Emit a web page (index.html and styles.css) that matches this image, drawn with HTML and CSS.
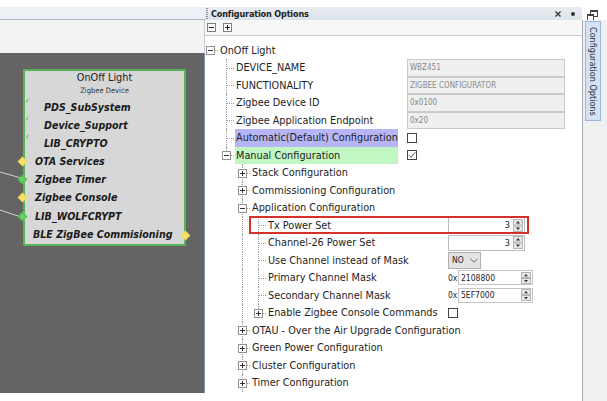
FILE: index.html
```html
<!DOCTYPE html>
<html>
<head>
<meta charset="utf-8">
<link rel="stylesheet" href="styles.css">
</head>
<body>
<div class="app">
  <div class="left">
    <div class="l-top"></div>
    <div class="l-bar"></div>
    <div class="l-light"></div>
    <div class="canvas">
      <svg class="wires" width="30" height="200" viewBox="0 0 30 200"><path d="M0 119 L21 125" stroke="#d4d4d4" stroke-width="1" fill="none"/><path d="M0 157 L21 164" stroke="#d4d4d4" stroke-width="1" fill="none"/></svg>
      <div class="node">
        <div class="nt">OnOff Light</div>
        <div class="ns">Zigbee Device</div>
        <div class="ni i1"><span class="tick"></span>PDS_SubSystem</div>
        <div class="ni i1"><span class="tick"></span>Device_Support</div>
        <div class="ni i1"><span class="tick"></span>LIB_CRYPTO</div>
        <div class="ni i2"><span class="dia y"></span>OTA Services</div>
        <div class="ni i2"><span class="dia gr"></span>Zigbee Timer</div>
        <div class="ni i2"><span class="dia y"></span>Zigbee Console</div>
        <div class="ni i2 wolf"><span class="dia gr"></span>LIB_WOLFCRYPT</div>
        <div class="ni i3"><span class="dia y r"></span>BLE ZigBee Commisioning</div>
      </div>
    </div>
    <div class="l-bottom"></div>
  </div>

  <div class="cfg">
    <div class="cfg-top"></div>
    <div class="cfg-head">
      <span class="grip"></span>
      <span class="title">Configuration Options</span>
      <span class="spacer"></span>
      <svg class="hx" width="6" height="6" viewBox="0 0 6 6"><path d="M0.5 0.5 L5.5 5.5 M5.5 0.5 L0.5 5.5" stroke="#333" stroke-width="1.3"/></svg>
      <span class="hdot"></span>
    </div>
    <div class="cfg-tools">
      <span class="tb minus"></span>
      <span class="tb plus"></span>
    </div>
    <div class="tree">
      <div class="row"><span class="n root"><i class="exp minus"></i></span><span class="lbl">OnOff Light</span></div>

      <div class="row"><span class="g"></span><span class="n mid"></span><span class="lbl w1">DEVICE_NAME</span><span class="tf">WBZ451</span></div>
      <div class="row"><span class="g"></span><span class="n mid"></span><span class="lbl w1">FUNCTIONALITY</span><span class="tf">ZIGBEE CONFIGURATOR</span></div>
      <div class="row"><span class="g"></span><span class="n mid"></span><span class="lbl w1">Zigbee Device ID</span><span class="tf">0x0100</span></div>
      <div class="row"><span class="g"></span><span class="n mid"></span><span class="lbl w1">Zigbee Application Endpoint</span><span class="tf">0x20</span></div>
      <div class="row"><span class="g"></span><span class="n mid"></span><span class="lbl w1 purple">Automatic(Default) Configuration</span><span class="val"><span class="cb"></span></span></div>
      <div class="row"><span class="g"></span><span class="n last"><i class="exp minus"></i></span><span class="lbl w1 green">Manual Configuration</span><span class="val"><span class="cb"><svg width="8" height="8" viewBox="0 0 8 8"><path d="M0.8 4 L3 6.3 L7.3 1.2" stroke="#555" stroke-width="1" fill="none"/></svg></span></span></div>

      <div class="row"><span class="g"></span><span class="g"></span><span class="n mid"><i class="exp plus"></i></span><span class="lbl">Stack Configuration</span></div>
      <div class="row"><span class="g"></span><span class="g"></span><span class="n mid"><i class="exp plus"></i></span><span class="lbl">Commissioning Configuration</span></div>
      <div class="row"><span class="g"></span><span class="g"></span><span class="n mid"><i class="exp minus"></i></span><span class="lbl">Application Configuration</span></div>

      <div class="row"><span class="g"></span><span class="g"></span><span class="g v"></span><span class="n mid"></span><span class="lbl w3">Tx Power Set</span><span class="val"><span class="spin"><span class="sv">3</span><svg class="sb" width="10" height="13" viewBox="0 0 10 13"><rect x="0.5" y="0.5" width="9" height="5.5" fill="#e8e8e8" stroke="#b4b4b4"/><rect x="0.5" y="7" width="9" height="5.5" fill="#e8e8e8" stroke="#b4b4b4"/><path d="M3 4.5h4L5 2z" fill="#333"/><path d="M3 8.5h4l-2 2.5z" fill="#333"/></svg></span></span><span class="redbox"></span></div>
      <div class="row"><span class="g"></span><span class="g"></span><span class="g v"></span><span class="n mid"></span><span class="lbl w3">Channel-26 Power Set</span><span class="val"><span class="spin"><span class="sv">3</span><svg class="sb" width="10" height="13" viewBox="0 0 10 13"><rect x="0.5" y="0.5" width="9" height="5.5" fill="#e8e8e8" stroke="#b4b4b4"/><rect x="0.5" y="7" width="9" height="5.5" fill="#e8e8e8" stroke="#b4b4b4"/><path d="M3 4.5h4L5 2z" fill="#333"/><path d="M3 8.5h4l-2 2.5z" fill="#333"/></svg></span></span></div>
      <div class="row"><span class="g"></span><span class="g"></span><span class="g v"></span><span class="n mid"></span><span class="lbl w3">Use Channel instead of Mask</span><span class="val"><span class="combo">NO<svg width="8" height="5" viewBox="0 0 8 5"><path d="M0.5 0.8 L4 4.2 L7.5 0.8" stroke="#666" stroke-width="1" fill="none"/></svg></span></span></div>
      <div class="row"><span class="g"></span><span class="g"></span><span class="g v"></span><span class="n mid"></span><span class="lbl w3">Primary Channel Mask</span><span class="val"><span class="ox">0x</span><span class="hexf"><span class="hv">2108800</span><svg class="sb" width="10" height="12" viewBox="0 0 10 12"><rect x="0.5" y="0.5" width="9" height="5" fill="#e8e8e8" stroke="#b4b4b4"/><rect x="0.5" y="6.5" width="9" height="5" fill="#e8e8e8" stroke="#b4b4b4"/><path d="M3 4.2h4L5 2z" fill="#333"/><path d="M3 8h4l-2 2.3z" fill="#333"/></svg></span></span></div>
      <div class="row"><span class="g"></span><span class="g"></span><span class="g v"></span><span class="n mid"></span><span class="lbl w3">Secondary Channel Mask</span><span class="val"><span class="ox">0x</span><span class="hexf"><span class="hv">5EF7000</span><svg class="sb" width="10" height="12" viewBox="0 0 10 12"><rect x="0.5" y="0.5" width="9" height="5" fill="#e8e8e8" stroke="#b4b4b4"/><rect x="0.5" y="6.5" width="9" height="5" fill="#e8e8e8" stroke="#b4b4b4"/><path d="M3 4.2h4L5 2z" fill="#333"/><path d="M3 8h4l-2 2.3z" fill="#333"/></svg></span></span></div>
      <div class="row"><span class="g"></span><span class="g"></span><span class="g v"></span><span class="n last"><i class="exp plus"></i></span><span class="lbl w3">Enable Zigbee Console Commands</span><span class="val"><span class="cb"></span></span></div>

      <div class="row"><span class="g"></span><span class="g"></span><span class="n mid"><i class="exp plus"></i></span><span class="lbl">OTAU - Over the Air Upgrade Configuration</span></div>
      <div class="row"><span class="g"></span><span class="g"></span><span class="n mid"><i class="exp plus"></i></span><span class="lbl">Green Power Configuration</span></div>
      <div class="row"><span class="g"></span><span class="g"></span><span class="n mid"><i class="exp plus"></i></span><span class="lbl">Cluster Configuration</span></div>
      <div class="row"><span class="g"></span><span class="g"></span><span class="n mid"><i class="exp plus"></i></span><span class="lbl">Timer Configuration</span></div>
    </div>
  </div>

  <div class="strip">
    <div class="strip-top">
      <svg class="restore" width="11" height="11" viewBox="0 0 11 11"><rect x="3.5" y="0.5" width="7" height="6" fill="#fff" stroke="#444"/><rect x="3.5" y="0.5" width="7" height="1.5" fill="#444"/><rect x="0.5" y="4.5" width="6" height="6" fill="#fff" stroke="#444"/><rect x="0.5" y="4.5" width="6" height="1.5" fill="#444"/></svg>
    </div>
    <div class="strip-body">
      <div class="vtab"><span>Configuration Options</span></div>
    </div>
  </div>
</div>
</body>
</html>
```

FILE: styles.css
```css
* { box-sizing: border-box; margin: 0; padding: 0; }
html, body { width: 607px; height: 401px; overflow: hidden; background: #fff; }
body { font-family: "DejaVu Sans Condensed", "DejaVu Sans", sans-serif; color: #1e1e1e; }

.app { display: flex; height: 401px; }

/* ---------- left canvas ---------- */
.left { width: 205px; flex: none; display: flex; flex-direction: column; }
.l-top { height: 7px; }
.l-bar { height: 13px; background: #edf0f4; border-bottom: 1px solid #a9b6c6; }
.l-light { height: 33px; background: #f3f3f3; border-right: 1px solid #c6ced8; }
.canvas { height: 340px; background: #646464; border-right: 1px solid #8797ae; position: relative; }
.l-bottom { flex: 1; }

.wires { position: absolute; left: 0; top: 0; }

.node {
  position: absolute; left: 23px; top: 16px; width: 163px; height: 177px;
  background: #d7d7d7; border: 2px solid #56b356; border-radius: 1px;
}
.nt { height: 13px; line-height: 13px; text-align: center; font-size: 10.8px; color: #222; }
.ns { height: 14px; line-height: 14px; text-align: center; font-size: 7.5px; color: #333; }
.ni {
  position: relative; height: 18px; line-height: 18px;
  font-size: 10.6px; font-weight: bold; font-style: oblique; color: #1a1a1a; white-space: nowrap;
}
.i1 { padding-left: 19px; }
.i2 { padding-left: 10px; }
.i3 { padding-left: 8px; height: 19px; line-height: 21px; }
.wolf { line-height: 20px; }
.tick {
  position: absolute; left: 0px; top: 0px; width: 3px; height: 4px;
  border-right: 1px solid #59c759; transform: rotate(25deg);
}
.dia {
  position: absolute; left: -6px; top: 50%; width: 7px; height: 7px; margin-top: -3.5px;
  transform: rotate(45deg);
}
.wolf .dia { margin-top: -2.5px; }
.i3 .dia { margin-top: -2px; }
.dia.y { background: #f6e46a; box-shadow: inset 0 0 0 1px #f0d63e; }
.dia.gr { background: #63d363; box-shadow: inset 0 0 0 1px #46bb46; }
.dia.r { left: auto; right: -5px; }

/* ---------- configuration panel ---------- */
.cfg { width: 377px; flex: none; display: flex; flex-direction: column; background: #fff; }
.cfg-top { height: 7px; }
.cfg-head {
  height: 13px; display: flex; align-items: center;
  background: linear-gradient(#e9edf2, #dde3ea);
}
.grip {
  width: 2px; height: 11px; margin: 0 3px 0 1px;
  background: repeating-linear-gradient(#8a96a6 0 1px, transparent 1px 2px);
}
.title { font-size: 9px; font-weight: bold; color: #1c1c1c; letter-spacing: -0.15px; }
.spacer { flex: 1; }
.hx { margin-right: 10px; }
.hdot { width: 4px; height: 4px; border-radius: 50%; background: #333; margin-right: 7px; }

.cfg-tools {
  height: 16px; display: flex; align-items: center; gap: 7px; padding-left: 2px;
  background: #f7f7f7; border-bottom: 1px solid #c8c8c8;
}
.tb { width: 9px; height: 9px; border: 1px solid #7f7f7f; background: #fff; position: relative; }
.tb::before { content: ""; position: absolute; left: 1px; right: 1px; top: 3px; height: 1px; background: #222; }
.tb.plus::after { content: ""; position: absolute; top: 1px; bottom: 1px; left: 3px; width: 1px; background: #222; }

.tree { padding-top: 5.5px; font-size: 10.8px; }
.row { display: flex; height: 17.5px; position: relative; white-space: nowrap; }

.g { width: 16px; flex: none; position: relative; }
.g.v::after {
  content: ""; position: absolute; left: 5px; top: 0; bottom: 0; border-left: 1px dotted #999;
}
.n { width: 14px; flex: none; position: relative; }
.n::before {
  content: ""; position: absolute; left: 6px; right: 1px; top: 50%; border-top: 1px dotted #999;
}
.n.mid::after, .n.last::after {
  content: ""; position: absolute; left: 5px; top: 0; border-left: 1px dotted #999;
}
.n.mid::after { bottom: 0; }
.n.last::after { height: 50%; }

.exp {
  position: absolute; left: 1px; top: 50%; margin-top: -4px; width: 9px; height: 9px;
  border: 1px solid #929292; background: #fff; z-index: 1;
}
.exp::before { content: ""; position: absolute; left: 1px; right: 1px; top: 3px; height: 1px; background: #333; }
.exp.plus::after { content: ""; position: absolute; top: 1px; bottom: 1px; left: 3px; width: 1px; background: #333; }

.lbl { display: flex; align-items: center; flex: none; padding-left: 1px; }
.w1 { width: 163px; margin-right: 9px; }
.w3 { width: 172px; margin-right: 9px; }
.purple { background: #b6b6f7; }
.green { background: #c2f6c2; }

.val { display: flex; align-items: center; }

.tf {
  width: 158px; height: 17.5px; display: flex; align-items: center; padding-left: 2px;
  background: #efefef; border: 1px solid #cacaca;
  font-size: 8px; color: #8a8a8a;
}
.cb {
  width: 10px; height: 10px; border: 1px solid #444; background: #fff;
  display: flex; align-items: center; justify-content: center;
}

.spin {
  width: 77px; height: 16px; border: 1px solid #bcbcbc; background: #fff;
  display: flex; align-items: center; justify-content: flex-end; padding-right: 1px;
}
.sv { font-size: 9px; color: #222; margin-right: 3px; }
.sb { flex: none; }

.combo {
  width: 33px; height: 17px; border: 1px solid #b0b0b0; background: #e3e3e3;
  display: flex; align-items: center; gap: 6px; padding-left: 3px;
  font-size: 8.5px; color: #222;
}

.ox { font-size: 8.5px; color: #222; width: 10px; }
.hexf {
  width: 75px; height: 15px; border: 1px solid #c4c4c4; background: #fff;
  display: flex; align-items: center; padding-right: 1px;
}
.hv { flex: 1; font-size: 8.5px; color: #222; padding-left: 2px; }

.redbox {
  position: absolute; left: 44px; top: -1px; width: 280px; height: 18px;
  border: 2px solid #d6302b; pointer-events: none;
}

/* ---------- right strip ---------- */
.strip { flex: 1; display: flex; flex-direction: column; }
.strip-top { height: 20px; padding: 6px 0 0 5px; }
.strip-body { flex: 1; background: #f0f0f0; border-left: 1px solid #a7adb5; padding: 1px 0 0 2px; }
.vtab {
  width: 16px; height: 100px; background: #d2e3f6; border: 1px solid #9db7d6;
  writing-mode: vertical-rl; display: flex; align-items: center; justify-content: center;
  font-size: 9px; color: #2a2a2a;
}
```
